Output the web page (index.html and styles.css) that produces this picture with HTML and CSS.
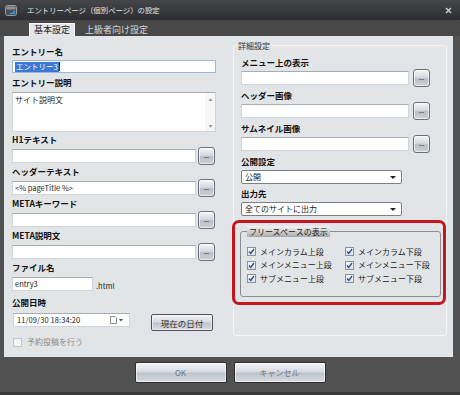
FILE: index.html
```html
<!DOCTYPE html>
<html lang="ja">
<head>
    <meta charset="UTF-8">
    <title>エントリーページ(個別ページ)の設定</title>
    <link rel="stylesheet" href="styles.css">
</head>
<body>
    <div class="window">
        <div class="titlebar">
            <svg class="app-icon" width="12" height="11" viewBox="0 0 12 11">
                <rect x="0.5" y="0.5" width="11" height="10" rx="2" fill="#4a4c50" stroke="#9a9ca0"/>
                <rect x="1.5" y="1.5" width="9" height="3" fill="#8d9095"/>
                <path d="M2 9 Q7 8.5 10 5 L10 9 Z" fill="#3c8fe0"/>
            </svg>
            <span class="title">エントリーページ（個別ページ）の設定</span>
            <svg class="close" width="7" height="7" viewBox="0 0 7 7">
                <path d="M1 1 L6 6 M6 1 L1 6" stroke="#d0d0d0" stroke-width="1.4"/>
            </svg>
        </div>

        <div class="tabs">
            <div class="tab active">基本設定</div>
            <div class="tab">上級者向け設定</div>
        </div>

        <div class="content">
            <div class="col-left">
                <div class="field field-name">
                    <div class="label">エントリー名</div>
                    <div class="input input-full"><span class="selected">エントリー3</span><span class="caret"></span></div>
                </div>

                <div class="field field-desc">
                    <div class="label">エントリー説明</div>
                    <div class="textarea">
                        <div class="textarea-text">サイト説明文</div>
                        <div class="scroll">
                            <span>▴</span>
                            <span>▾</span>
                        </div>
                    </div>
                </div>

                <div class="field field-btn">
                    <div class="label">H1テキスト</div>
                    <div class="row">
                        <div class="input input-left"></div>
                        <button class="dots"><span></span></button>
                    </div>
                </div>

                <div class="field field-btn">
                    <div class="label">ヘッダーテキスト</div>
                    <div class="row">
                        <div class="input input-left">&lt;% pageTitle %&gt;</div>
                        <button class="dots"><span></span></button>
                    </div>
                </div>

                <div class="field field-btn">
                    <div class="label">METAキーワード</div>
                    <div class="row">
                        <div class="input input-left"></div>
                        <button class="dots"><span></span></button>
                    </div>
                </div>

                <div class="field field-btn">
                    <div class="label">META説明文</div>
                    <div class="row">
                        <div class="input input-left"></div>
                        <button class="dots"><span></span></button>
                    </div>
                </div>

                <div class="field field-file">
                    <div class="label">ファイル名</div>
                    <div class="row file-row">
                        <div class="input input-file">entry3</div>
                        <span class="suffix">.html</span>
                    </div>
                </div>

                <div class="field field-date">
                    <div class="label">公開日時</div>
                    <div class="row date-row">
                        <div class="input input-date">
                            <span class="date-text">11/09/30 18:34:20</span>
                            <svg width="14" height="8" viewBox="0 0 14 8">
                                <path d="M0.5 0.5 H5 L6.5 2 V7.5 H0.5 Z" fill="#fff" stroke="#8a8a8a"/>
                                <path d="M9 3 L13 3 L11 5.5 Z" fill="#2d4c9c"/>
                            </svg>
                        </div>
                        <button class="btn btn-now">現在の日付</button>
                    </div>
                </div>

                <div class="check disabled">
                    <span class="box"></span>
                    <span>予約投稿を行う</span>
                </div>
            </div>

            <fieldset class="details">
                <legend>詳細設定</legend>

                <div class="field field-r">
                    <div class="label">メニュー上の表示</div>
                    <div class="row">
                        <div class="input input-right"></div>
                        <button class="dots"><span></span></button>
                    </div>
                </div>

                <div class="field field-r">
                    <div class="label">ヘッダー画像</div>
                    <div class="row">
                        <div class="input input-right"></div>
                        <button class="dots"><span></span></button>
                    </div>
                </div>

                <div class="field field-r">
                    <div class="label">サムネイル画像</div>
                    <div class="row">
                        <div class="input input-right"></div>
                        <button class="dots"><span></span></button>
                    </div>
                </div>

                <div class="field field-sel">
                    <div class="label">公開設定</div>
                    <div class="select"><span>公開</span><i></i></div>
                </div>

                <div class="field field-sel">
                    <div class="label">出力先</div>
                    <div class="select"><span>全てのサイトに出力</span><i></i></div>
                </div>

                <div class="highlight">
                    <fieldset class="freespace">
                        <legend>フリースペースの表示</legend>
                        <div class="checks">
                            <div class="check"><span class="box checked"></span><span>メインカラム上段</span></div>
                            <div class="check"><span class="box checked"></span><span>メインカラム下段</span></div>
                            <div class="check"><span class="box checked"></span><span>メインメニュー上段</span></div>
                            <div class="check"><span class="box checked"></span><span>メインメニュー下段</span></div>
                            <div class="check"><span class="box checked"></span><span>サブメニュー上段</span></div>
                            <div class="check"><span class="box checked"></span><span>サブメニュー下段</span></div>
                        </div>
                    </fieldset>
                </div>
            </fieldset>
        </div>

        <div class="footer">
            <button class="btn btn-footer">OK</button>
            <button class="btn btn-footer">キャンセル</button>
        </div>
    </div>
</body>
</html>
```

FILE: styles.css
```css
* {
    margin: 0;
    padding: 0;
    box-sizing: border-box;
    font-family: "Noto Sans CJK JP", sans-serif;
}

body {
    background-color: #515151;
}

.window {
    width: 460px;
    height: 395px;
    display: flex;
    flex-direction: column;
    background-color: #525252;
    overflow: hidden;
}

.titlebar {
    height: 20px;
    display: flex;
    align-items: center;
    padding: 0 8px 0 5px;
    background: linear-gradient(#44464a, #2c2d30);
}

.app-icon {
    margin-right: 10px;
}

.title {
    flex: 1;
    color: #e6e6e6;
    font-size: 7.4px;
    line-height: 10px;
}

.tabs {
    height: 16px;
    display: flex;
    align-items: flex-end;
    gap: 6px;
    padding-left: 29px;
    background-color: #484848;
}

.tab {
    height: 13px;
    padding: 0 4px;
    font-size: 9px;
    line-height: 13px;
    color: #d4d4d4;
}

.tab.active {
    background-color: #e3e6e9;
    color: #222;
    border: 1px solid #f4f5f6;
    border-bottom: none;
    line-height: 12px;
}

.content {
    height: 321px;
    margin: 0 7px 0 4px;
    display: flex;
    gap: 17px;
    padding-left: 8px;
    background-color: #e2e5e8;
}

.col-left {
    width: 204px;
    padding-top: 10px;
}

.label {
    height: 11px;
    font-size: 8.5px;
    line-height: 11px;
    font-weight: bold;
    color: #111;
    white-space: nowrap;
}

.field-name .label { margin-bottom: 3px; }
.field-name { margin-bottom: 4px; }
.field-desc .label { margin-bottom: 4px; }
.field-desc { margin-bottom: 2px; }
.field-btn .label { margin-bottom: 2px; }
.field-btn { margin-bottom: 1px; }
.field-file .label { margin-bottom: 4px; }
.field-file { margin-bottom: 6px; }
.field-date .label { margin-bottom: 5px; }
.field-date { margin-bottom: 6px; }

.row {
    height: 18px;
    display: flex;
    align-items: center;
    gap: 2px;
}

.input {
    height: 14px;
    display: flex;
    align-items: center;
    padding: 0 2px;
    background-color: #fff;
    border: 1px solid #d0d3d7;
    border-top-color: #a9adb2;
    font-size: 7.5px;
    line-height: 12px;
    color: #222;
    white-space: nowrap;
}

.input-full {
    width: 204px;
    height: 13px;
    border-color: #9bb8de;
}

.selected {
    background-color: #3a78d4;
    color: #fff;
    padding: 0 1px;
    line-height: 10px;
}

.caret {
    width: 1px;
    height: 9px;
    background-color: #222;
}

.input-left {
    width: 184px;
}

.textarea {
    width: 204px;
    height: 40px;
    display: flex;
    background-color: #fff;
    border: 1px solid #d0d3d7;
    border-top-color: #a9adb2;
}

.textarea-text {
    flex: 1;
    padding: 2px 2px;
    font-size: 8px;
    line-height: 10px;
    color: #222;
}

.scroll {
    width: 10px;
    display: flex;
    flex-direction: column;
    justify-content: space-between;
    align-items: center;
    padding: 3px 0 2px;
    font-size: 6px;
    line-height: 6px;
    color: #888;
    background-color: #f6f6f6;
}

.dots {
    width: 17px;
    height: 18px;
    display: flex;
    align-items: center;
    justify-content: center;
    border: 1px solid #6c7078;
    border-radius: 3px;
    background: linear-gradient(#f5f6f8, #d5d8dd 45%, #b9bec6 55%, #cfd3d8);
    box-shadow: inset 0 0 0 1px rgba(255, 255, 255, 0.6);
}

.dots span {
    width: 5px;
    height: 1px;
    margin-top: 2px;
    background-color: #7a7e85;
}

.file-row {
    height: 14px;
    gap: 3px;
}

.input-file {
    width: 81px;
}

.suffix {
    font-size: 7.5px;
    line-height: 12px;
    color: #222;
    margin-top: 4px;
}

.date-row {
    align-items: flex-start;
    gap: 0;
}

.input-date {
    width: 117px;
    margin-left: 1px;
    justify-content: space-between;
    padding: 0 5px 0 3px;
}

.date-text {
    font-size: 7.5px;
    letter-spacing: 0.1px;
}

.btn {
    display: flex;
    align-items: center;
    justify-content: center;
    border: 1px solid #4e5258;
    border-radius: 2px;
    background: linear-gradient(#f1f3f6, #d8dce2 45%, #bfc4cc 55%, #d9dce1);
    box-shadow: inset 0 0 0 1px rgba(255, 255, 255, 0.55);
    font-size: 8.5px;
    color: #333;
}

.btn-now {
    width: 62px;
    height: 17px;
    margin: 1px 0 0 21px;
}

.check {
    display: flex;
    align-items: center;
    gap: 4px;
    font-size: 8px;
    line-height: 10px;
    color: #222;
    white-space: nowrap;
}

.check.disabled {
    margin-left: 1px;
    gap: 5px;
    color: #8a8a8a;
}

.box {
    width: 9px;
    height: 9px;
    border: 1px solid #c3c6ca;
    background-color: #f2f3f4;
}

.box.checked {
    border-color: #8891a0;
    background: url("data:image/svg+xml;utf8,<svg xmlns='http://www.w3.org/2000/svg' width='7' height='7' viewBox='0 0 7 7'><path d='M1 3.5 L2.8 5.5 L6 1' fill='none' stroke='%232d4c9c' stroke-width='1.4'/></svg>") center no-repeat, linear-gradient(#f8f9fa, #dfe2e7);
}

.details {
    width: 214px;
    height: 296px;
    margin-top: 4px;
    padding: 6px 6px 0 7px;
    border: 1px solid #f3f4f6;
    border-radius: 3px;
    min-width: 0;
}

.details > legend {
    margin-left: -4px;
    padding: 0 1px;
    font-size: 8px;
    line-height: 11px;
    color: #333;
}

.field-r .label { margin-bottom: 1px; }
.field-r { margin-bottom: 3px; }
.field-r .row { gap: 4px; }

.input-right {
    width: 168px;
}

.field-sel .label { margin-bottom: 3px; }
.field-sel { margin-bottom: 4px; }

.select {
    width: 161px;
    height: 14px;
    display: flex;
    align-items: center;
    justify-content: space-between;
    padding: 0 5px 0 3px;
    background-color: #fff;
    border: 1px solid #7d7f83;
    border-radius: 2px;
    font-size: 8px;
    line-height: 12px;
    color: #222;
}

.select i {
    width: 0;
    height: 0;
    border-left: 3px solid transparent;
    border-right: 3px solid transparent;
    border-top: 3px solid #222;
}

.highlight {
    width: 214px;
    height: 85px;
    margin: 3px 0 0 -9px;
    border: 3px solid #c8141b;
    border-radius: 7px;
}

.freespace {
    width: 201px;
    margin: 3px 0 0 5px;
    padding: 8px 4px 10px 6px;
    border: 1px solid #8a8d91;
    border-radius: 3px;
    min-width: 0;
}

.freespace legend {
    padding: 0 2px;
    font-size: 8px;
    line-height: 11px;
    color: #222;
    background: linear-gradient(#f4f4f4, #c8c8c8 60%, #a9a9a9);
}

.checks {
    display: grid;
    grid-template-columns: 98px 1fr;
    grid-auto-rows: 13.5px;
    align-items: center;
}

.footer {
    flex: 1;
    display: flex;
    justify-content: center;
    gap: 7px;
    padding-top: 5px;
    background-color: #515151;
    border-bottom: 3px solid #3a3a3a;
}

.btn-footer {
    width: 92px;
    height: 21px;
    border-color: #2e2f31;
    color: #6f7378;
    font-size: 8px;
}
```
